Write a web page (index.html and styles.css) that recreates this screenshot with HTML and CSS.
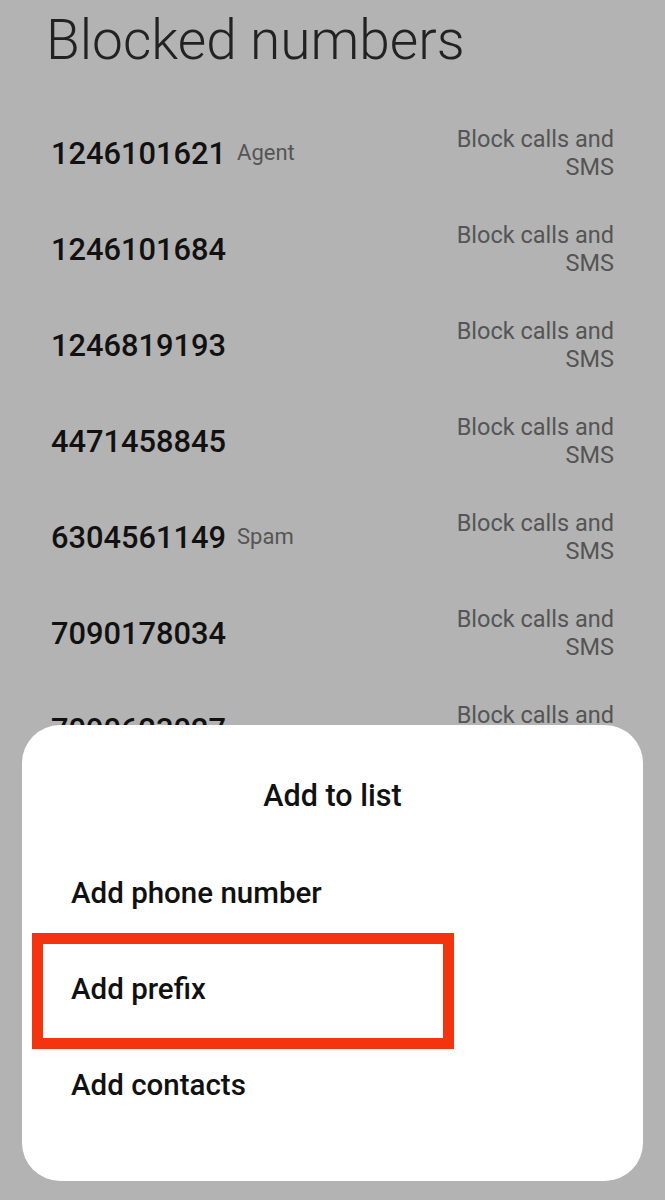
FILE: index.html
```html
<!DOCTYPE html>
<html lang="en">
<head>
<meta charset="utf-8">
<title>Blocked numbers</title>
<link rel="stylesheet" href="styles.css">
</head>
<body>
<div class="screen">
  <header class="header">
    <h1 class="title">Blocked numbers</h1>
  </header>
  <ul class="list">
    <li class="row"><div class="num-group"><span class="num">1246101621</span><span class="tag">Agent</span></div><div class="mode">Block calls and SMS</div></li>
    <li class="row"><div class="num-group"><span class="num">1246101684</span></div><div class="mode">Block calls and SMS</div></li>
    <li class="row"><div class="num-group"><span class="num">1246819193</span></div><div class="mode">Block calls and SMS</div></li>
    <li class="row"><div class="num-group"><span class="num">4471458845</span></div><div class="mode">Block calls and SMS</div></li>
    <li class="row"><div class="num-group"><span class="num">6304561149</span><span class="tag">Spam</span></div><div class="mode">Block calls and SMS</div></li>
    <li class="row"><div class="num-group"><span class="num">7090178034</span></div><div class="mode">Block calls and SMS</div></li>
    <li class="row"><div class="num-group"><span class="num">7090623027</span></div><div class="mode">Block calls and SMS</div></li>
    <li class="row"><div class="num-group"><span class="num">7090623111</span></div><div class="mode">Block calls and SMS</div></li>
  </ul>
  <div class="sheet">
    <div class="sheet-title">Add to list</div>
    <div class="sheet-items">
      <div class="item">Add phone number</div>
      <div class="item">Add prefix</div>
      <div class="item">Add contacts</div>
    </div>
    <div class="highlight"></div>
  </div>
</div>
</body>
</html>
```

FILE: styles.css
```css
* { box-sizing: border-box; }
html, body {
  margin: 0;
  padding: 0;
  background: #b3b3b3;
}
body {
  font-family: Roboto, "Noto Sans", "Liberation Sans", sans-serif;
}
.screen {
  position: relative;
  width: 665px;
  height: 1200px;
  overflow: hidden;
  background: #b3b3b3;
}
.header {
  height: 104px;
  padding: 5px 0 0 46px;
}
.title {
  margin: 0;
  font-size: 55px;
  line-height: 70px;
  font-weight: 300;
  color: #222;
}
.list {
  list-style: none;
  margin: 0;
  padding: 0 51px 0 51px;
}
.row {
  height: 96px;
  display: flex;
  align-items: center;
  justify-content: space-between;
}
.num-group {
  display: flex;
  align-items: center;
  gap: 11px;
  margin-top: 4px;
}
.num {
  font-size: 30.8px;
  line-height: 36px;
  font-weight: 500;
  color: #111;
}
.tag {
  font-size: 22px;
  line-height: 28px;
  color: #555;
  margin-top: -2px;
}
.mode {
  width: 170px;
  text-align: right;
  font-size: 23.5px;
  line-height: 28px;
  color: #555;
  margin-top: 2px;
}
.sheet {
  position: absolute;
  left: 22px;
  top: 725px;
  width: 621px;
  height: 456px;
  background: #fff;
  border-radius: 38px;
  padding-top: 51px;
}
.sheet-title {
  text-align: center;
  font-size: 30.5px;
  line-height: 40px;
  font-weight: 500;
  color: #111;
  margin-bottom: 29px;
}
.sheet-items {
  display: flex;
  flex-direction: column;
}
.item {
  height: 96px;
  line-height: 96px;
  padding-left: 49px;
  font-size: 29.5px;
  font-weight: 500;
  color: #111;
}
.highlight {
  position: absolute;
  left: 10px;
  top: 208px;
  width: 422px;
  height: 116px;
  border: 11px solid #f4330f;
}
```
